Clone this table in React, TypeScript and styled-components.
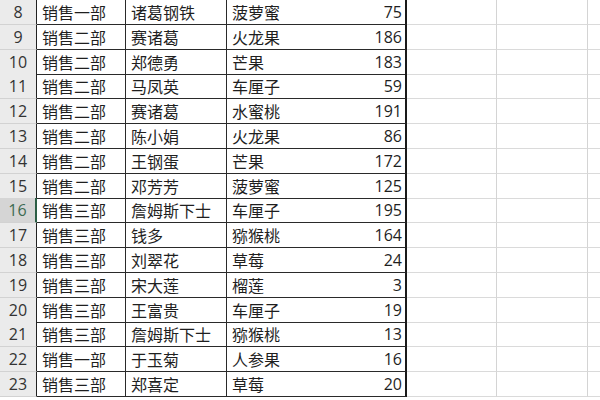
import React from "react";
import styled, { createGlobalStyle } from "styled-components";

const Global = createGlobalStyle`
  html, body { margin: 0; padding: 0; background: #ffffff; }
  body { width: 600px; height: 400px; overflow: hidden; }
`;

const Sheet = styled.div`
  width: 600px;
  height: 400px;
  overflow: hidden;
  display: flex;
  flex-direction: column;
  font-family: "Noto Sans CJK SC", "Noto Sans", sans-serif;
  color: #1f1f1f;
`;

const Row = styled.div`
  display: grid;
  grid-template-columns: 37px 89px 101px 97px 83px 90px 91px 12px;
  height: 24.8px;
  flex: none;
`;

const Header = styled.div<{ $active?: boolean }>`
  background: ${(p) => (p.$active ? "#d5d5d5" : "#ebebeb")};
  color: ${(p) => (p.$active ? "#3d6b52" : "#333333")};
  border-bottom: 1px solid #d2d2d2;
  border-right: ${(p) => (p.$active ? "2px solid #2c5e45" : "1px solid #222")};
  box-sizing: border-box;
  display: flex;
  align-items: center;
  justify-content: center;
  font-family: "Open Sans", "Liberation Sans", sans-serif;
  font-size: 16px;
`;

const Cell = styled.div<{ $num?: boolean; $edge?: boolean; $open?: boolean }>`
  box-sizing: border-box;
  border-bottom: 1px solid #2a2a2a;
  border-right: ${(p) =>
    p.$open ? "none" : p.$edge ? "2px solid #1a1a1a" : "1px solid #2a2a2a"};
  display: flex;
  align-items: center;
  justify-content: ${(p) => (p.$num ? "flex-end" : "flex-start")};
  padding: ${(p) => (p.$num ? "0 3px 0 0" : "0 0 0 5px")};
  font-size: 16px;
  font-family: ${(p) =>
    p.$num ? `"Open Sans", "Liberation Sans", sans-serif` : `"Noto Sans CJK SC", sans-serif`};
  white-space: nowrap;
  overflow: visible;
`;

const Empty = styled.div<{ $last?: boolean }>`
  box-sizing: border-box;
  border-bottom: 1px solid #dadada;
  border-right: ${(p) => (p.$last ? "none" : "1px solid #d4d4d4")};
`;

type Rec = [number, string, string, string, number];

const data: Rec[] = [
  [8, "销售一部", "诸葛钢铁", "菠萝蜜", 75],
  [9, "销售二部", "赛诸葛", "火龙果", 186],
  [10, "销售二部", "郑德勇", "芒果", 183],
  [11, "销售二部", "马凤英", "车厘子", 59],
  [12, "销售二部", "赛诸葛", "水蜜桃", 191],
  [13, "销售二部", "陈小娟", "火龙果", 86],
  [14, "销售二部", "王钢蛋", "芒果", 172],
  [15, "销售二部", "邓芳芳", "菠萝蜜", 125],
  [16, "销售三部", "詹姆斯下士", "车厘子", 195],
  [17, "销售三部", "钱多", "猕猴桃", 164],
  [18, "销售三部", "刘翠花", "草莓", 24],
  [19, "销售三部", "宋大莲", "榴莲", 3],
  [20, "销售三部", "王富贵", "车厘子", 19],
  [21, "销售三部", "詹姆斯下士", "猕猴桃", 13],
  [22, "销售一部", "于玉菊", "人参果", 16],
  [23, "销售三部", "郑喜定", "草莓", 20],
];

export default function App() {
  return (
    <>
      <Global />
      <Sheet>
        {data.map(([n, dept, name, fruit, qty]) => (
          <Row key={n}>
            <Header $active={n === 16}>{n}</Header>
            <Cell>{dept}</Cell>
            <Cell>{name}</Cell>
            <Cell $open>{fruit}</Cell>
            <Cell $num $edge>
              {qty}
            </Cell>
            <Empty />
            <Empty />
            <Empty $last />
          </Row>
        ))}
      </Sheet>
    </>
  );
}
